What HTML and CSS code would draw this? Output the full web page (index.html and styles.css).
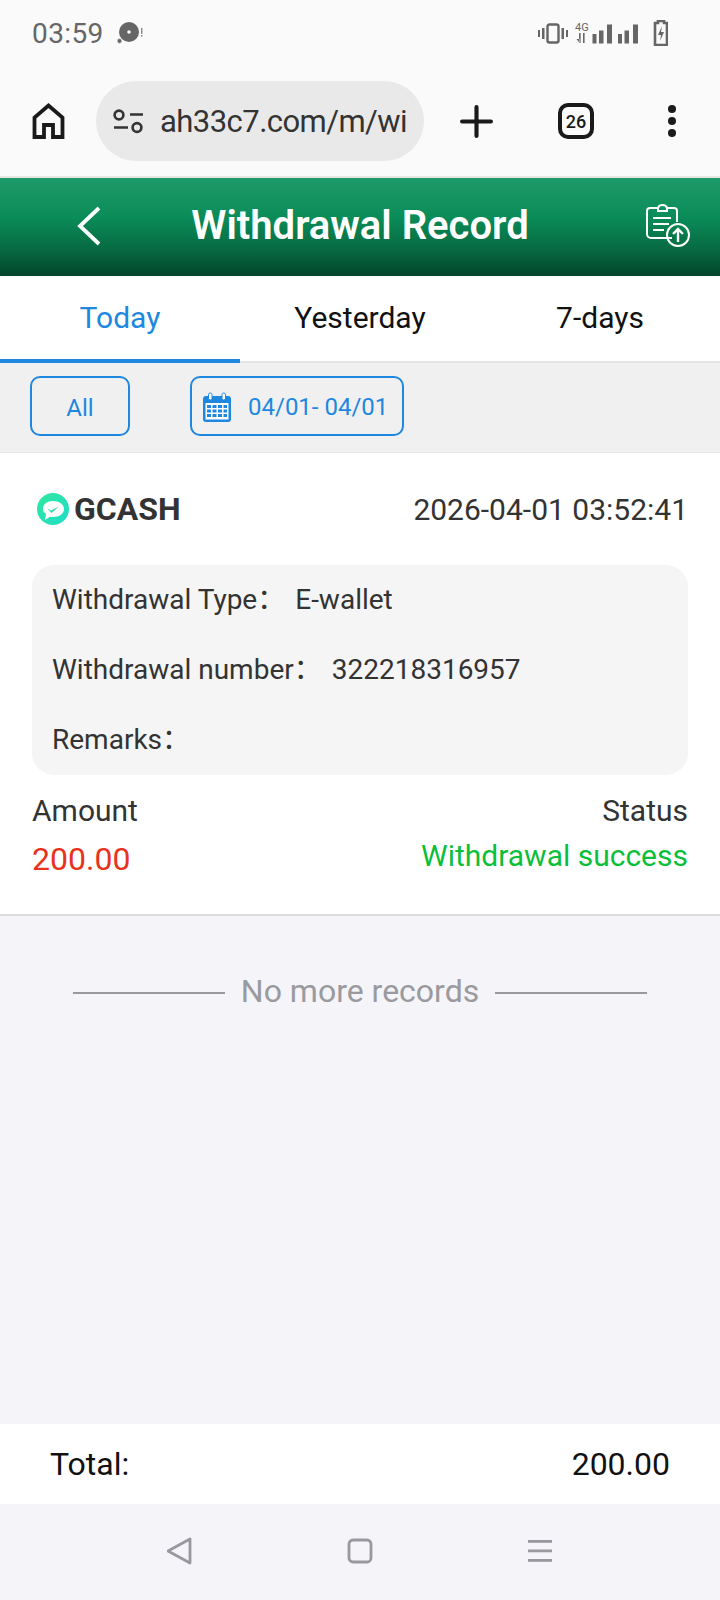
FILE: index.html
```html
<!DOCTYPE html>
<html lang="en">
<head>
<meta charset="utf-8">
<title>Withdrawal Record</title>
<link rel="stylesheet" href="styles.css">
</head>
<body>
<div class="screen">
  <div class="status">
    <div class="status-left">
      <span class="time">03:59</span>
      <svg class="ic-disc" viewBox="0 0 27 24"><circle cx="12" cy="11" r="10" fill="#666"/><circle cx="12" cy="11" r="1.800" fill="#fafafa"/><circle cx="2.500" cy="20" r="2.400" fill="#666" stroke="#fafafa" stroke-width=".6"/><rect x="24" y="7" width="1.400" height="6" fill="#888"/><rect x="24" y="14" width="1.400" height="1.600" fill="#888"/></svg>
    </div>
    <svg class="ic-signal" viewBox="0 0 130 26" fill="#666">
      <rect x="9.500" y="4.500" width="11" height="18" rx="2" fill="none" stroke="#666" stroke-width="2.400"/>
      <rect x="4" y="8" width="2.500" height="11"/><rect x="0" y="10" width="2" height="7"/><rect x="23.500" y="8" width="2.500" height="11"/><rect x="28" y="10" width="2" height="7"/>
      <text x="37" y="11" class="g4">4G</text>
      <path d="M41 13h1.600v10h-1.600zM38.500 19l3 4v-4zM45 13h1.600v10H45z"/>
      <rect x="54.500" y="14" width="4" height="9.500"/><rect x="61" y="10.500" width="4.500" height="13"/><rect x="69" y="4.500" width="5" height="19"/>
      <rect x="80" y="14" width="4" height="9.500"/><rect x="86.500" y="10.500" width="4.500" height="13"/><rect x="95" y="4.500" width="5" height="19"/>
      <path d="M117 3h3V1h6v2h3v22h-12z" fill="none" stroke="#666" stroke-width="2.600"/>
      <path d="M124 6l-4 9h3l-1 6 4-9h-3z"/>
    </svg>
  </div>
  <div class="toolbar">
    <svg class="ic-home" viewBox="0 0 32 36"><path d="M2 34V14.500L16 2.500l14 12V34H20.500V22h-9v12z" fill="none" stroke="#1a1a1a" stroke-width="3.800"/></svg>
    <div class="urlbar">
      <svg class="ic-tune" viewBox="0 0 30 25" fill="none" stroke="#333" stroke-width="2.600"><circle cx="6" cy="6" r="4.400"/><path d="M17 5.500h13M1 18.500h14"/><circle cx="24" cy="18.500" r="4.400"/></svg>
      <span class="url">ah33c7.com/m/wi</span>
    </div>
    <svg class="ic-plus" viewBox="0 0 32 32"><path d="M16 2v28M2 16h28" stroke="#1a1a1a" stroke-width="4" stroke-linecap="round"/></svg>
    <div class="tabs-count">26</div>
    <div class="dots"><i></i><i></i><i></i></div>
  </div>
  <header class="head">
    <svg class="ic-back" viewBox="0 0 26 42"><path d="M23 3L4 21l19 18" fill="none" stroke="#fff" stroke-width="3.800"/></svg>
    <h1 class="title">Withdrawal Record</h1>
    <svg class="ic-record" viewBox="0 0 46 44" fill="none" stroke="#fff" stroke-width="2"><path d="M27 34H6a4 4 0 0 1-4-4V7a3 3 0 0 1 3-3h8c1-4 8-4 9 0h7a3 3 0 0 1 3 3v11"/><path d="M13 4v3h9V4M8 14h18M8 20h16M8 26h11"/><circle cx="33" cy="31" r="11"/><path d="M33 38V25M28 30l5-5 5 5" stroke-width="2.400"/></svg>
  </header>
  <nav class="tabs">
    <span class="tab tab-on">Today</span>
    <span class="tab">Yesterday</span>
    <span class="tab">7-days</span>
  </nav>
  <div class="filters">
    <span class="chip chip-all">All</span>
    <span class="chip chip-date">
      <svg class="ic-cal" viewBox="0 0 28 30"><path d="M3 4h22a3 3 0 0 1 3 3v20a3 3 0 0 1-3 3H3a3 3 0 0 1-3-3V7a3 3 0 0 1 3-3z" fill="#1e88e0"/><rect x="2.500" y="11" width="23" height="16.500" fill="#fff"/><g fill="#1e88e0"><rect x="4" y="13" width="4" height="3"/><rect x="9.500" y="13" width="4" height="3"/><rect x="15" y="13" width="4" height="3"/><rect x="20.500" y="13" width="3.500" height="3"/><rect x="4" y="17.500" width="4" height="3"/><rect x="9.500" y="17.500" width="4" height="3"/><rect x="15" y="17.500" width="4" height="3"/><rect x="20.500" y="17.500" width="3.500" height="3"/><rect x="4" y="22" width="4" height="3"/><rect x="9.500" y="22" width="4" height="3"/><rect x="15" y="22" width="4" height="3"/><rect x="20.500" y="22" width="3.500" height="3"/></g><rect x="5.500" y="1" width="3.500" height="7" rx="1.700" fill="#fff" stroke="#1e88e0"/><rect x="19" y="1" width="3.500" height="7" rx="1.700" fill="#fff" stroke="#1e88e0"/></svg>
      <span>04/01- 04/01</span>
    </span>
  </div>
  <section class="card">
    <div class="card-top">
      <div class="brand">
        <svg class="ic-gcash" viewBox="0 0 32 32"><defs><linearGradient id="gc" x1="0" y1="0" x2="1" y2="1"><stop offset="0" stop-color="#2ee89f"/><stop offset="1" stop-color="#20dcc8"/></linearGradient></defs><circle cx="16" cy="16" r="16" fill="url(#gc)"/><path d="M16 8c6 0 11 3 11 8s-5 8-11 8c-1 0-2 0-3-.300L8 27l1-6C7 19.500 6 18 6 16c0-5 4-8 10-8z" fill="#fff"/><path d="M10 15l4 2.500 8-4-7.500 6.500z" fill="#2bdcb0"/></svg>
        <span class="brand-name">GCASH</span>
      </div>
      <span class="stamp">2026-04-01 03:52:41</span>
    </div>
    <div class="info">
      <div class="info-row"><span class="info-key">Withdrawal Type：</span><span>E-wallet</span></div>
      <div class="info-row"><span class="info-key">Withdrawal number：</span><span>322218316957</span></div>
      <div class="info-row"><span class="info-key">Remarks：</span></div>
    </div>
    <div class="sum-row"><span>Amount</span><span>Status</span></div>
    <div class="val-row"><span class="amount">200.00</span><span class="state">Withdrawal success</span></div>
  </section>
  <main class="rest">
    <div class="end"><i></i><span>No more records</span><i></i></div>
  </main>
  <div class="total"><span>Total:</span><span>200.00</span></div>
  <div class="navbar">
    <svg class="nav-ic" viewBox="0 0 26 28" fill="none" stroke="#98989e" stroke-width="2.800" stroke-linejoin="round"><path d="M23 2v24L1 14z"/></svg>
    <svg class="nav-ic" viewBox="0 0 26 28" fill="none" stroke="#98989e" stroke-width="2.800"><rect x="2" y="3" width="22" height="22" rx="4"/></svg>
    <svg class="nav-ic" viewBox="0 0 26 28" fill="#98989e"><rect x="1" y="3" width="24" height="2.800"/><rect x="1" y="12.500" width="24" height="2.800"/><rect x="1" y="22" width="24" height="2.800"/></svg>
  </div>
</div>
</body>
</html>
```
FILE: styles.css
```css
* { box-sizing: border-box; }
html, body { margin: 0; padding: 0; }
body { font-family: Roboto, "Noto Sans CJK SC", "Liberation Sans", sans-serif; background: #f4f4f9; }
.screen { width: 720px; height: 1600px; display: flex; flex-direction: column; overflow: hidden; }

.status { height: 66px; background: #fafafa; display: flex; align-items: center; justify-content: space-between; padding: 0 52px 0 32px; }
.status-left { display: flex; align-items: center; gap: 13px; }
.time { font-size: 28px; letter-spacing: .4px; color: #666; }
.ic-disc { width: 27px; height: 24px; }
.ic-signal { width: 130px; height: 26px; }
.g4 { font: 11px Roboto, sans-serif; fill: #666; }

.toolbar { height: 112px; background: #fafafa; border-bottom: 2px solid #e6e6e0; display: flex; align-items: center; padding: 0 0 0 32px; }
.ic-home { width: 33px; height: 36px; flex: none; }
.urlbar { width: 328px; height: 80px; margin-left: 31px; border-radius: 40px; background: #e9e9e9; display: flex; align-items: center; padding-left: 17px; overflow: hidden; }
.ic-tune { width: 30px; height: 25px; flex: none; }
.url { font-size: 31px; letter-spacing: -.55px; color: #333; margin-left: 17px; white-space: nowrap; }
.ic-plus { width: 33px; height: 33px; margin-left: 36px; flex: none; }
.tabs-count { width: 36px; height: 36px; margin-left: 65px; border: 4px solid #1a1a1a; border-radius: 10px; display: flex; align-items: center; justify-content: center; font-size: 18px; font-weight: 500; color: #1a1a1a; flex: none; }
.dots { margin-left: 74px; display: flex; flex-direction: column; gap: 4px; }
.dots i { width: 8px; height: 8px; border-radius: 50%; background: #1a1a1a; display: block; }

.head { height: 98px; flex: none; display: flex; align-items: center; position: relative; justify-content: center; padding-bottom: 4px; background: linear-gradient(#1f9a68 0%, #0a8c58 40%, #076b42 72%, #03452a 100%); }
.title { margin: 0; font-size: 40px; font-weight: 600; color: #fff; }
.ic-back { position: absolute; left: 76px; top: 27px; width: 26px; height: 42px; }
.ic-record { position: absolute; left: 645px; top: 26px; width: 46px; height: 44px; }

.tabs { height: 87px; flex: none; background: #fff; display: flex; border-bottom: 2px solid #e4e4e4; }
.tab { flex: 1; display: flex; align-items: center; justify-content: center; font-size: 30px; color: #111; padding-bottom: 2px; }
.tab-on { color: #1e88e0; box-shadow: 0 2px 0 0 #1e88e0, inset 0 -2px 0 0 #1e88e0; }

.filters { height: 90px; flex: none; background: #f0f0f0; display: flex; align-items: flex-start; gap: 60px; padding: 13px 30px 0; border-bottom: 1px solid #e6e6e6; }
.chip { height: 60px; border: 2px solid #1e88e0; border-radius: 10px; color: #1e88e0; font-size: 24px; line-height: 30px; padding-top: 2px; display: flex; align-items: center; justify-content: center; background: transparent; }
.chip-all { width: 100px; padding-top: 4px; }
.chip-date { width: 214px; gap: 17px; justify-content: flex-start; padding-left: 11px; }
.ic-cal { width: 28px; height: 30px; }

.card { height: 463px; flex: none; background: #fff; border-bottom: 2px solid #dcdcdc; padding: 0 32px; color: #333; font-size: 28px; }
.card-top { height: 112px; display: flex; align-items: center; justify-content: space-between; }
.brand { display: flex; align-items: center; gap: 5px; padding-left: 5px; }
.ic-gcash { width: 32px; height: 32px; }
.brand-name { font-size: 32px; font-weight: 700; color: #333; }
.stamp { font-size: 30px; color: #333; }
.info { background: #f5f5f5; border-radius: 22px; padding: 0 20px; height: 210px; display: flex; flex-direction: column; justify-content: center; }
.info-row { height: 70px; line-height: 70px; display: flex; align-items: baseline; }
.info-key { margin-right: 10px; }
.sum-row, .val-row { display: flex; justify-content: space-between; }
.sum-row { margin-top: 18px; line-height: 35px; font-size: 30px; }
.val-row { margin-top: 10px; line-height: 35px; align-items: flex-start; }
.amount { font-size: 32px; color: #e8321e; padding-top: 4px; }
.state { font-size: 30px; color: #0cbf3a; }

.rest { flex: 1; padding-top: 56px; }
.end { display: flex; align-items: center; justify-content: center; gap: 16px; color: #9a9a9e; font-size: 32px; }
.end i { width: 152px; height: 2px; margin-top: 3px; background: #9a9a9e; display: block; }

.total { height: 80px; flex: none; background: #fff; display: flex; align-items: center; justify-content: space-between; padding: 0 50px; font-size: 32px; color: #111; }
.navbar { height: 96px; flex: none; background: #f4f4f9; display: flex; justify-content: center; align-items: flex-start; gap: 154px; padding-top: 33px; }
.nav-ic { width: 26px; height: 28px; }
```
